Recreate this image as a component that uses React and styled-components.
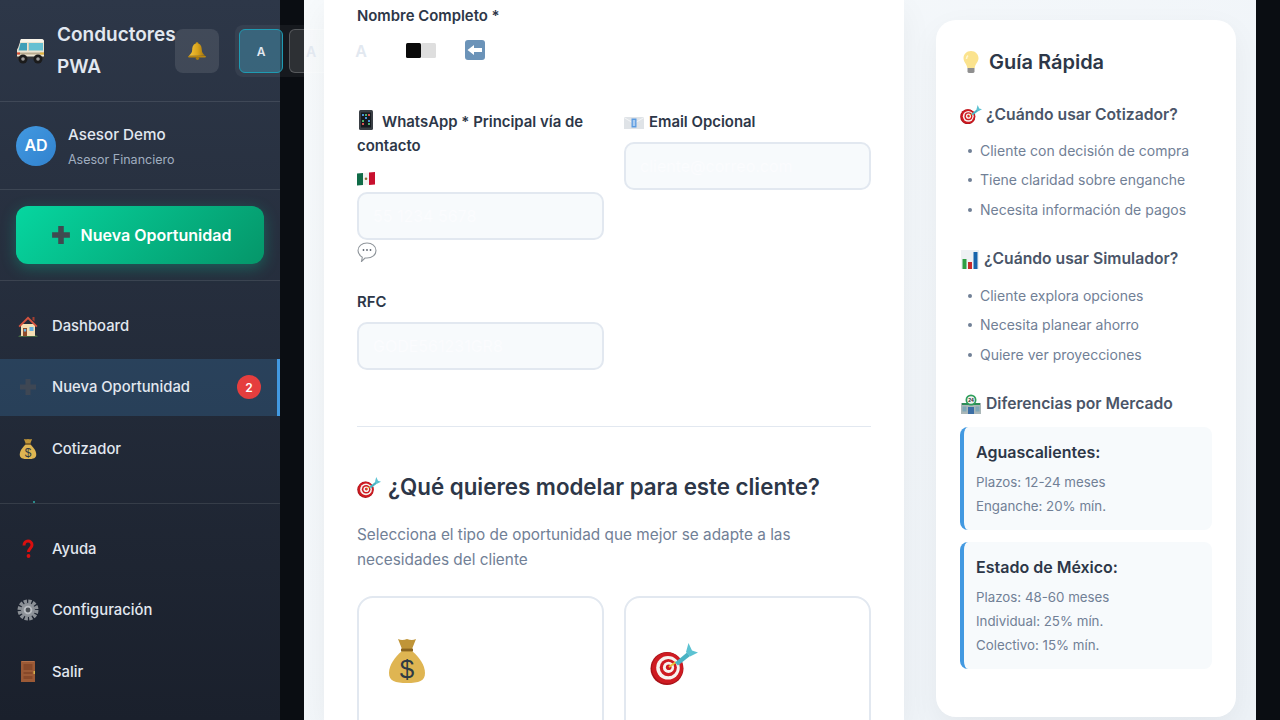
import React from 'react';
import styled, { createGlobalStyle } from 'styled-components';

const GlobalStyle = createGlobalStyle`
  * {
    box-sizing: border-box;
  }
  html,
  body {
    margin: 0;
    height: 720px;
    overflow: hidden;
    font-family: Inter, "Noto Sans", sans-serif;
    line-height: 1.6;
    background: #0a0d12;
  }
`;

const Shell = styled.div`
  display: flex;
  width: 1280px;
  height: 720px;
  overflow: hidden;
  background: #0a0d12;
`;

const Sidebar = styled.aside`
  position: relative;
  z-index: 2;
  flex: 0 0 280px;
  width: 280px;
  height: 720px;
  display: flex;
  flex-direction: column;
  background: linear-gradient(180deg, #2d3748 0%, #1a202c 100%);
  color: #e2e8f0;
`;

const SideHeader = styled.header`
  display: flex;
  align-items: center;
  flex: none;
  padding: 19px 16px 18px;
  border-bottom: 1px solid rgba(255, 255, 255, 0.1);
`;

const Brand = styled.div`
  display: flex;
  align-items: center;
  gap: 11px;
  flex: none;
  font-size: 19px;
  font-weight: 600;
  line-height: 32px;
  color: #e2e8f0;
`;

const BrandName = styled.span`
  width: 118px;
`;

const BellButton = styled.button`
  flex: none;
  width: 44px;
  height: 44px;
  padding: 0;
  margin-right: 16px;
  display: flex;
  align-items: center;
  justify-content: center;
  border: 0;
  border-radius: 8px;
  background: rgba(255, 255, 255, 0.1);
`;

const SizeGroup = styled.div`
  flex: none;
  display: flex;
  gap: 6px;
  padding: 4px;
  border-radius: 8px;
  background: rgba(255, 255, 255, 0.05);
`;

const SizeButton = styled.button`
  flex: none;
  width: 44px;
  height: 44px;
  margin-left: ${(p) => p.$shift || 0}px;
  padding: 0 0 ${(p) => (p.$lift ? 2 : 0)}px;
  display: flex;
  align-items: center;
  justify-content: center;
  font-family: inherit;
  font-size: ${(p) => p.$size || 12}px;
  font-weight: 600;
  color: #e2e8f0;
  border-radius: 6px;
  border: 1px solid ${(p) => (p.$active ? '#1f9bb3' : 'rgba(255, 255, 255, 0.2)')};
  background: ${(p) => (p.$active ? 'rgba(66, 185, 225, 0.3)' : 'rgba(255, 255, 255, 0.1)')};
`;

const UserBox = styled.div`
  display: flex;
  align-items: center;
  gap: 12px;
  flex: none;
  height: 88px;
  padding: 1px 16px 0;
  border-bottom: 1px solid rgba(255, 255, 255, 0.1);
`;

const Avatar = styled.div`
  width: 40px;
  height: 40px;
  border-radius: 50%;
  display: flex;
  align-items: center;
  justify-content: center;
  font-size: 16px;
  font-weight: 600;
  color: #fff;
  background: linear-gradient(135deg, #4299e1, #3182ce);
`;

const UserName = styled.div`
  font-size: 15.2px;
  font-weight: 500;
  line-height: 24px;
  color: #e2e8f0;
`;

const UserRole = styled.div`
  font-size: 12.5px;
  line-height: 20px;
  margin-top: 3px;
  color: #a0aec0;
`;

const ActionBox = styled.div`
  flex: none;
  padding: 16px;
  border-bottom: 1px solid rgba(255, 255, 255, 0.1);
`;

const NewButton = styled.button`
  width: 100%;
  height: 58px;
  display: flex;
  align-items: center;
  justify-content: center;
  gap: 10px;
  padding: 0 0 0 2px;
  border: 0;
  border-radius: 12px;
  font-family: inherit;
  font-size: 16px;
  font-weight: 600;
  color: #fff;
  background: linear-gradient(135deg, #06d6a0 0%, #059669 100%);
  box-shadow: 0 4px 15px rgba(6, 214, 160, 0.3);
`;

const Nav = styled.nav`
  flex: 1;
  min-height: 0;
  overflow: hidden;
  padding-top: 16px;
  display: flex;
  flex-direction: column;
  gap: 4px;
`;

const NavFooter = styled.div`
  flex: none;
  height: 217px;
  padding-top: 16px;
  display: flex;
  flex-direction: column;
  gap: 4px;
  border-top: 1px solid rgba(255, 255, 255, 0.1);
`;

const NavItem = styled.a`
  flex: none;
  height: 57.5px;
  display: flex;
  align-items: center;
  padding: 2px 16px 0;
  font-size: 14.8px;
  font-weight: 500;
  color: #e2e8f0;
  background: ${(p) => (p.$active ? 'rgba(66, 153, 225, 0.2)' : 'transparent')};
  border-right: 3px solid ${(p) => (p.$active ? '#4299e1' : 'transparent')};
`;

const NavIcon = styled.span`
  flex: none;
  width: 24px;
  margin: -2px 12px 0 0;
  display: flex;
  justify-content: center;
`;

const Badge = styled.span`
  margin: -2px 0 0 auto;
  width: 24px;
  height: 24px;
  border-radius: 50%;
  display: flex;
  align-items: center;
  justify-content: center;
  font-size: 12px;
  font-weight: 600;
  color: #fff;
  background: #e53e3e;
`;

const Page = styled.main`
  flex: none;
  width: 952px;
  height: 720px;
  margin-left: 24px;
  display: flex;
  align-items: flex-start;
  gap: 32px;
  padding: 0 20px;
  overflow: hidden;
  background: linear-gradient(135deg, #f7fafc 0%, #edf2f7 100%);
`;

const FormCard = styled.section`
  flex: none;
  width: 580px;
  height: 720px;
  padding: 4px 33px 0;
  background: #fff;
  box-shadow: 0 10px 30px rgba(0, 0, 0, 0.05);
`;

const NameLabel = styled.div`
  margin-bottom: 82px;
  font-size: 14.9px;
  font-weight: 600;
  line-height: 24px;
  color: #2d3748;
`;

const FieldGrid = styled.div`
  display: grid;
  grid-template-columns: 247px 247px;
  column-gap: 20px;
  row-gap: 27px;
  align-items: start;
`;

const Label = styled.label`
  display: block;
  margin-bottom: 8px;
  font-size: 14.9px;
  font-weight: 600;
  line-height: 24px;
  color: #2d3748;
`;

const Input = styled.input`
  display: block;
  width: 100%;
  height: 48px;
  padding: 0 14px;
  border: 2px solid #e2e8f0;
  border-radius: 10px;
  background: #f7fafc;
  font-family: inherit;
  font-size: 16px;
  &::placeholder {
    color: #fbfcfe;
  }
`;

const FlagLine = styled.div`
  height: 26px;
  display: flex;
  align-items: center;
`;

const BubbleLine = styled.div`
  height: 23px;
  display: flex;
  align-items: center;
`;

const Divider = styled.hr`
  margin: 56px 0 41px;
  border: 0;
  border-top: 1px solid #e2e8f0;
`;

const SectionTitle = styled.h2`
  margin: 0 0 16px;
  font-size: 22.3px;
  font-weight: 600;
  line-height: 38px;
  color: #2d3748;
`;

const SectionHint = styled.p`
  margin: 0 0 24px;
  font-size: 15.35px;
  line-height: 25px;
  color: #718096;
`;

const OptionGrid = styled.div`
  display: grid;
  grid-template-columns: 247px 247px;
  column-gap: 20px;
`;

const OptionCard = styled.div`
  height: 180px;
  padding: ${(p) => p.$top}px 24px 0;
  border: 2px solid #e2e8f0;
  border-radius: 16px;
  background: #fff;
`;

const GuideCard = styled.aside`
  flex: none;
  width: 300px;
  height: 697px;
  margin-top: 20px;
  padding: 24px;
  border-radius: 20px;
  background: #fff;
  box-shadow: 0 10px 30px rgba(0, 0, 0, 0.05);
`;

const GuideTitle = styled.h3`
  margin: 0 0 21.5px;
  padding-left: 1px;
  display: flex;
  align-items: center;
  gap: 8px;
  font-size: 20px;
  font-weight: 600;
  line-height: 36px;
  color: #2d3748;
`;

const GuideHeading = styled.h4`
  margin: ${(p) => (p.$last ? '1px 0 10.5px' : '0 0 8.5px')};
  display: flex;
  align-items: center;
  gap: 4px;
  font-size: 15.7px;
  font-weight: 600;
  line-height: 26px;
  color: #4a5568;
`;

const GuideList = styled.ul`
  margin: 0 0 22px;
  padding: 0;
  list-style: none;
`;

const GuideItem = styled.li`
  position: relative;
  padding-left: 20px;
  font-size: 14px;
  line-height: 29.4px;
  color: #718096;
  &::before {
    content: '';
    position: absolute;
    left: 8px;
    top: 13px;
    width: 4px;
    height: 4px;
    border-radius: 50%;
    background: #718096;
  }
`;

const MarketCard = styled.div`
  margin-bottom: 12px;
  padding: 12px 16px 12px 12px;
  border-left: 4px solid #4299e1;
  border-radius: 8px;
  background: #f7fafc;
`;

const MarketName = styled.div`
  margin-bottom: 5px;
  font-size: 16px;
  font-weight: 600;
  line-height: 26px;
  color: #2d3748;
`;

const MarketLine = styled.div`
  font-size: 13.3px;
  line-height: 24px;
  color: #718096;
`;

const Glyph = styled.svg`
  flex: none;
  display: ${(p) => (p.$inline ? 'inline-block' : 'block')};
  vertical-align: ${(p) => (p.$inline ? '-3px' : 'baseline')};
  margin-right: ${(p) => p.$gap || 0}px;
`;

const Svg = ({ w, h, box, inline, gap, children }) => (
  <Glyph width={w} height={h} viewBox={box || `0 0 ${w} ${h}`} $inline={inline} $gap={gap}>
    {children}
  </Glyph>
);

const VanIcon = () => (
  <Svg w={30} h={26}>
    <path d="M5 1h20q3 0 3 3v15H1v-7q0-1 1-2z" fill="#ece5d2" />
    <path d="M5 1h20q3 0 3 3H3.800z" fill="#f9f5ea" />
    <path d="M4.500 5H11v7.500H2.500z" fill="#3f9fb8" />
    <path d="M12.500 5H27v7.500H12.500z" fill="#67c0d2" />
    <path d="M12 5h1v8h-1z" fill="#d7cfb9" />
    <path d="M1 14.500h27v2H1z" fill="#b8ab90" />
    <path d="M1 14.500h3v2H1z" fill="#d9492f" />
    <path d="M24 14.500h4v2h-4z" fill="#e2b33a" />
    <path d="M0 18.500h29v2.500H0z" fill="#34363a" />
    <circle cx="7" cy="21" r="4.500" fill="#1b1b1b" />
    <circle cx="7" cy="21" r="1.800" fill="#9a9a9a" />
    <circle cx="22" cy="21" r="4.500" fill="#1b1b1b" />
    <circle cx="22" cy="21" r="1.800" fill="#9a9a9a" />
  </Svg>
);

const BellIcon = () => (
  <Svg w={20} h={20}>
    <defs>
      <linearGradient id="bellGold" x1="0" x2="1">
        <stop offset="0" stopColor="#f6c53a" />
        <stop offset="0.55" stopColor="#d9a31b" />
        <stop offset="1" stopColor="#9c6f0c" />
      </linearGradient>
    </defs>
    <circle cx="10" cy="2.600" r="1.400" fill="#c99614" />
    <path d="M10 2.500c-3.600 0-4.700 3-4.800 6.300 0 2.800-1.600 4.400-3.400 6h16.400c-1.800-1.600-3.400-3.200-3.400-6-.1-3.300-1.200-6.300-4.800-6.300z" fill="url(#bellGold)" />
    <path d="M1 15h18l-.6 1.600H1.600z" fill="#b9860f" />
    <circle cx="10.500" cy="17.300" r="1.600" fill="#a97a0e" />
  </Svg>
);

const PlusIcon = ({ color, size }) => (
  <Svg w={size} h={size} box="0 0 18 18">
    <path d="M6.500 1h5v5.500H17v5h-5.500V17h-5v-5.500H1v-5h5.500z" fill={color} />
  </Svg>
);

const HouseIcon = () => (
  <Svg w={22} h={22}>
    <path d="M1 21.500c2-2 18-2 20 0z" fill="#5e9e4c" />
    <path d="M4 9h14v12H4z" fill="#f5deb3" />
    <path d="M11 1.500 1.500 11 2.800 12.200 11 4.200l8.200 8L20.500 11z" fill="#d5533f" />
    <path d="M15.500 2h2v4.500l-2-2z" fill="#a33f30" />
    <path d="M6 13h4v8H6z" fill="#8e4a2a" />
    <path d="M12.500 12h4v4h-4z" fill="#63b1e3" />
    <path d="M6.800 14h2.400v2.500H6.800z" fill="#63b1e3" />
  </Svg>
);

const BagIcon = ({ size }) => (
  <Svg w={size} h={size} box="0 0 24 24">
    <path d="M7.500 1c1.700.8 3 .5 4.500 0 1.500.5 2.800.8 4.500 0l-2 5h-5z" fill="#c09538" />
    <path d="M9.500 7C6 10 3 14 3 18c0 4 3 5 9 5s9-1 9-5c0-4-3-8-6.500-11z" fill="#dfb552" />
    <path d="M9 5.800h6v1.400H9z" fill="#8a6420" />
    <text x="12" y="20.500" textAnchor="middle" fontFamily="Liberation Sans, sans-serif" fontSize="13" fill="#2f3a44">$</text>
  </Svg>
);

const QuestionIcon = () => (
  <Svg w={20} h={20}>
    <path d="M6 6.500C6 3.500 8 2 10 2s4 1.500 4 4c0 3-3.500 3.500-3.500 7" fill="none" stroke="#d90f0f" strokeWidth="3" />
    <circle cx="10.500" cy="17" r="1.900" fill="#d90f0f" />
  </Svg>
);

const GearIcon = () => (
  <Svg w={22} h={22}>
    <circle cx="11" cy="11" r="8.500" fill="none" stroke="#8b9096" strokeWidth="4" strokeDasharray="3.200 1.250" />
    <circle cx="11" cy="11" r="7" fill="#8f949a" />
    <circle cx="11" cy="11" r="4.300" fill="#b9bdc2" />
    <circle cx="11" cy="11" r="2.400" fill="#4a4f55" />
  </Svg>
);

const DoorIcon = () => (
  <Svg w={22} h={23}>
    <path d="M4 1h14v21H4z" fill="#9c5a36" />
    <path d="M5 1h12v1H5z" fill="#b4704a" />
    <path d="M6.500 4h9v6h-9zM6.500 12h9v2h-9zM6.500 16h9v3h-9z" fill="#87492a" />
    <path d="M16.500 11h1.500v3h-1.500z" fill="#d8b24a" />
  </Svg>
);

const TargetIcon = ({ w, inline, gap }) => (
  <Svg w={w} h={(w * 42) / 48} box="0 0 48 42" inline={inline} gap={gap}>
    <circle cx="17" cy="25.500" r="16.500" fill="#a81218" />
    <circle cx="17.500" cy="25" r="15.500" fill="#cf1b22" />
    <circle cx="18" cy="24.800" r="11.800" fill="#f7f3f0" />
    <circle cx="18.300" cy="24.600" r="8.600" fill="#cf1b22" />
    <circle cx="18.500" cy="24.400" r="5.600" fill="#f7f3f0" />
    <circle cx="18.700" cy="24.200" r="2.800" fill="#cf1b22" />
    <path d="M19 24 26 19" stroke="#e7c23a" strokeWidth="2" />
    <path d="M25 19.500 37 9.500l3 3.500-12 9.500z" fill="#49b3c4" />
    <path d="M36 9 38.500 0l3.500 7.500L48 9.500 40 13.500z" fill="#5cc2d2" />
  </Svg>
);

const ChartIcon = () => (
  <Svg w={20} h={20}>
    <path d="M1 1h18v19H1z" fill="#eef1f4" />
    <path d="M2.500 10h4v10h-4z" fill="#2f9e44" />
    <path d="M8 13h4v7H8z" fill="#c92a2a" />
    <path d="M13.500 3h4v17h-4z" fill="#1864ab" />
  </Svg>
);

// bars only: the sidebar list cuts this one off just under its top edge
const NavChartIcon = () => (
  <Svg w={20} h={22}>
    <path d="M1 10h4v12H1z" fill="#2f9e44" />
    <path d="M7 14h4v8H7z" fill="#c92a2a" />
    <path d="M15 2h2v20h-2z" fill="#2a8a8a" />
  </Svg>
);

const BulbIcon = () => (
  <Svg w={20} h={24}>
    <path d="M10 1C5.500 1 2.500 4.300 2.500 8.300c0 3.700 3.300 5.700 3.800 9.700h7.400c.5-4 3.800-6 3.800-9.700C17.500 4.300 14.500 1 10 1z" fill="#fbe38e" />
    <path d="M7 5.500C6 6.500 5.500 7.500 5.500 9" stroke="#fff7d1" strokeWidth="1.500" fill="none" />
    <path d="M6.500 18h7v3.500q0 1.500-2 1.500h-3q-2 0-2-1.500z" fill="#8f8f8f" />
  </Svg>
);

const StoreIcon = () => (
  <Svg w={22} h={20}>
    <path d="M1 9h20v11H1z" fill="#aab7b8" />
    <path d="M2 9h18v2H2z" fill="#2e8b57" />
    <path d="M8 13h6v7H8z" fill="#3b6ea5" />
    <path d="M2.500 12.500h4v5h-4zM15.500 12.500h4v5h-4z" fill="#7fa8b8" />
    <circle cx="11" cy="6" r="5.500" fill="#2e9e5b" />
    <circle cx="11" cy="6" r="3.800" fill="#f3f3f3" />
    <text x="11" y="7.800" textAnchor="middle" fontFamily="Liberation Sans, sans-serif" fontWeight="700" fontSize="5" fill="#2b2b2b">24</text>
  </Svg>
);

const PhoneIcon = (props) => (
  <Svg w={18} h={20} {...props}>
    <path d="M3.500 0h11q1.500 0 1.500 1.500v17q0 1.500-1.500 1.500h-11Q2 20 2 18.500v-17Q2 0 3.500 0z" fill="#3a3f45" />
    <path d="M4 2.500h10v15H4z" fill="#151a1f" />
    <path d="M5 4h2v2H5zM8 7h2v2H8zM11 10h2v2h-2z" fill="#4a90d9" />
    <path d="M8 4h2v2H8zM5 10h2v2H5zM11 13h2v2h-2z" fill="#4fb06d" />
    <path d="M11 4h2v2h-2zM5 13h2v2H5z" fill="#d9534f" />
  </Svg>
);

const MailIcon = (props) => (
  <Svg w={20} h={14} {...props}>
    <path d="M0 1h20v12H0z" fill="#dfe3e7" />
    <path d="M0 1l10 6 10-6v1L10 8 0 2z" fill="#f3f5f7" />
    <path d="M7.500 2.500h5v9h-5z" fill="#5a9be0" />
    <path d="M8.800 4.500h2.400v.9H8.800zM8.800 6.500h2.400v.9H8.800zM8.800 8.500h2.400v.9H8.800z" fill="#fff" />
  </Svg>
);

const FlagIcon = () => (
  <Svg w={18} h={14}>
    <path d="M0 1.500 6 1v12l-6 .5z" fill="#0f6b47" />
    <path d="M6 1l6-.5v12l-6 .5z" fill="#f2f2f2" />
    <path d="M12 .5l6-.5v12.500l-6 .5z" fill="#c8102e" />
    <circle cx="9" cy="6.800" r="1.300" fill="#8a6b32" />
  </Svg>
);

const BubbleIcon = () => (
  <Svg w={20} h={20}>
    <path d="M10 1c5 0 9 3 9 7.500S15 16 10 16H8l-3.500 3.500 .8-4.200C3 13.800 1 11.300 1 8.500 1 4 5 1 10 1z" fill="#fff" stroke="#8f959b" strokeWidth="1.100" />
    <circle cx="6.500" cy="8" r=".9" fill="#5f6670" />
    <circle cx="10" cy="8" r=".9" fill="#5f6670" />
    <circle cx="13.500" cy="8" r=".9" fill="#5f6670" />
  </Svg>
);

const SquaresIcon = () => (
  <Svg w={30} h={15}>
    <rect x="0" y="0" width="15" height="15" rx="1.500" fill="#0a0a0a" />
    <rect x="15" y="0" width="15" height="15" rx="1.500" fill="#dedede" />
  </Svg>
);

const BackIcon = () => (
  <Svg w={20} h={20}>
    <rect x="0" y="0" width="20" height="20" rx="3" fill="#6b93b8" />
    <path d="M2.500 10 9 5v3h8v4H9v3z" fill="#fff" />
  </Svg>
);

const navItems = [
  { label: 'Dashboard', icon: <HouseIcon /> },
  { label: 'Nueva Oportunidad', icon: <PlusIcon color="#3e4754" size={18} />, active: true, badge: 2 },
  { label: 'Cotizador', icon: <BagIcon size={22} /> },
  { label: 'Simulador', icon: <NavChartIcon /> },
];

const footerItems = [
  { label: 'Ayuda', icon: <QuestionIcon /> },
  { label: 'Configuración', icon: <GearIcon /> },
  { label: 'Salir', icon: <DoorIcon /> },
];

const guides = [
  {
    title: '¿Cuándo usar Cotizador?',
    icon: <TargetIcon w={22} />,
    items: ['Cliente con decisión de compra', 'Tiene claridad sobre enganche', 'Necesita información de pagos'],
  },
  {
    title: '¿Cuándo usar Simulador?',
    icon: <ChartIcon />,
    items: ['Cliente explora opciones', 'Necesita planear ahorro', 'Quiere ver proyecciones'],
  },
];

const markets = [
  { name: 'Aguascalientes:', lines: ['Plazos: 12-24 meses', 'Enganche: 20% mín.'] },
  { name: 'Estado de México:', lines: ['Plazos: 48-60 meses', 'Individual: 25% mín.', 'Colectivo: 15% mín.'] },
];

const SideLink = ({ item }) => (
  <NavItem $active={item.active}>
    <NavIcon>{item.icon}</NavIcon>
    {item.label}
    {item.badge && <Badge>{item.badge}</Badge>}
  </NavItem>
);

const App = () => (
  <Shell>
    <GlobalStyle />
    <Sidebar>
      <SideHeader>
        <Brand>
          <VanIcon />
          <BrandName>Conductores PWA</BrandName>
        </Brand>
        <BellButton>
          <BellIcon />
        </BellButton>
        <SizeGroup>
          <SizeButton $active>A</SizeButton>
          <SizeButton $size={14}>A</SizeButton>
          <SizeButton $size={16}>A</SizeButton>
          <SizeButton $shift={10} $lift>
            <SquaresIcon />
          </SizeButton>
          <SizeButton $shift={4} $lift>
            <BackIcon />
          </SizeButton>
        </SizeGroup>
      </SideHeader>
      <UserBox>
        <Avatar>AD</Avatar>
        <div>
          <UserName>Asesor Demo</UserName>
          <UserRole>Asesor Financiero</UserRole>
        </div>
      </UserBox>
      <ActionBox>
        <NewButton>
          <PlusIcon color="#3f4a50" size={20} />
          Nueva Oportunidad
        </NewButton>
      </ActionBox>
      <Nav>
        {navItems.map((item) => (
          <SideLink key={item.label} item={item} />
        ))}
      </Nav>
      <NavFooter>
        {footerItems.map((item) => (
          <SideLink key={item.label} item={item} />
        ))}
      </NavFooter>
    </Sidebar>

    <Page>
      <FormCard>
        <NameLabel>Nombre Completo *</NameLabel>
        <FieldGrid>
          <div>
            <Label>
              <PhoneIcon inline gap={7} />
              WhatsApp * Principal vía de contacto
            </Label>
            <FlagLine>
              <FlagIcon />
            </FlagLine>
            <Input placeholder="55 1234 5678" />
            <BubbleLine>
              <BubbleIcon />
            </BubbleLine>
          </div>
          <div>
            <Label>
              <MailIcon inline gap={5} />
              Email Opcional
            </Label>
            <Input placeholder="cliente@correo.com" />
          </div>
          <div>
            <Label>RFC</Label>
            <Input placeholder="GODE561231GR8" />
          </div>
        </FieldGrid>
        <Divider />
        <SectionTitle>
          <TargetIcon w={24} inline gap={7} />
          ¿Qué quieres modelar para este cliente?
        </SectionTitle>
        <SectionHint>Selecciona el tipo de oportunidad que mejor se adapte a las necesidades del cliente</SectionHint>
        <OptionGrid>
          <OptionCard $top={39}>
            <BagIcon size={48} />
          </OptionCard>
          <OptionCard $top={45}>
            <TargetIcon w={48} />
          </OptionCard>
        </OptionGrid>
      </FormCard>

      <GuideCard>
        <GuideTitle>
          <BulbIcon />
          Guía Rápida
        </GuideTitle>
        {guides.map((guide) => (
          <React.Fragment key={guide.title}>
            <GuideHeading>
              {guide.icon}
              {guide.title}
            </GuideHeading>
            <GuideList>
              {guide.items.map((text) => (
                <GuideItem key={text}>{text}</GuideItem>
              ))}
            </GuideList>
          </React.Fragment>
        ))}
        <GuideHeading $last>
          <StoreIcon />
          Diferencias por Mercado
        </GuideHeading>
        {markets.map((market) => (
          <MarketCard key={market.name}>
            <MarketName>{market.name}</MarketName>
            {market.lines.map((line) => (
              <MarketLine key={line}>{line}</MarketLine>
            ))}
          </MarketCard>
        ))}
      </GuideCard>
    </Page>
  </Shell>
);

export default App;
